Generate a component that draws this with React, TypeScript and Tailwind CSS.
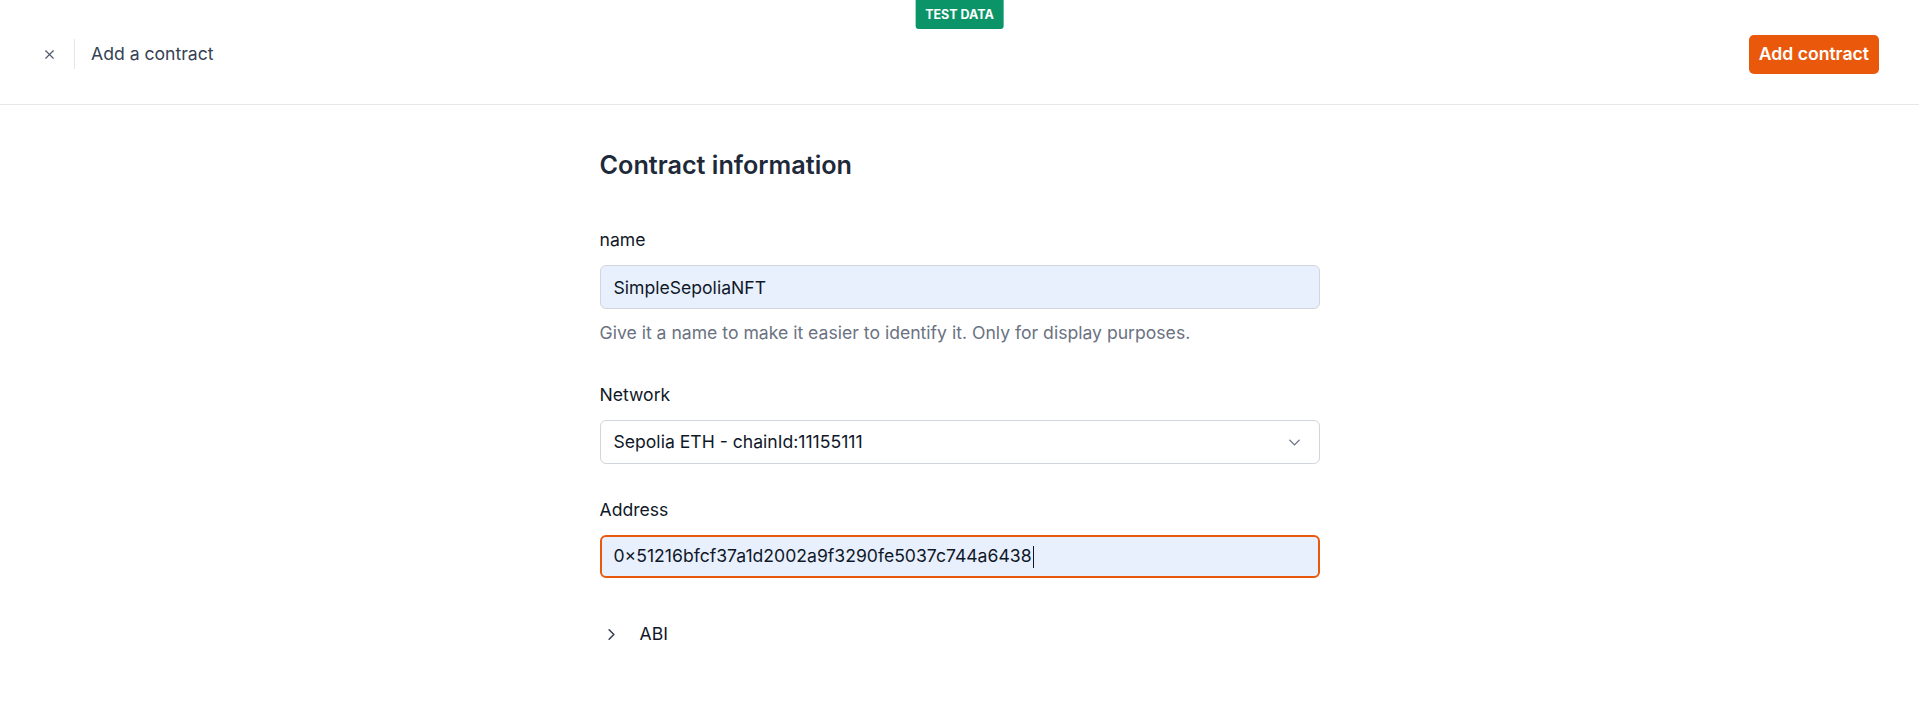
import { ChevronDown, ChevronRight, X } from 'lucide-react';

const font = { fontFamily: 'Inter, "Noto Sans", sans-serif' };

function Header() {
  return (
    <header className="relative flex h-[105px] items-center justify-between border-b border-gray-200 pl-[41px] pr-10 pt-1">
      <div className="absolute left-1/2 top-0 -translate-x-1/2 rounded-b-[3px] bg-[#0b9468] px-[10px] py-[7px] text-[12.5px] font-bold leading-[15px] text-white">
        TEST DATA
      </div>
      <div className="flex items-center">
        <button className="flex h-4 w-4 items-center justify-center text-gray-600">
          <X size={15} strokeWidth={1.75} />
        </button>
        <div className="ml-[17px] h-[30px] w-px bg-gray-200" />
        <div className="ml-4 text-[17.6px] text-gray-700">Add a contract</div>
      </div>
      <button className="h-[39px] rounded-[5px] bg-[#ea580c] px-[10px] text-[17.6px] font-semibold text-white">
        Add contract
      </button>
    </header>
  );
}

export default function App() {
  return (
    <div className="min-h-screen bg-white text-gray-900" style={font}>
      <Header />
      <main className="mx-auto max-w-[720px] pt-[44px]">
        <h1 className="text-[25.2px] font-semibold leading-8 text-gray-800">Contract information</h1>

        <label className="mt-[47px] block text-[17.6px] leading-6 text-gray-900">name</label>
        <input
          className="mt-[13px] block h-[44px] w-full rounded-md border border-gray-300 bg-[#e8f0fe] px-[13px] text-[17.6px] text-gray-900 outline-none"
          defaultValue="SimpleSepoliaNFT"
        />
        <p className="mt-3 text-[17.6px] leading-6 text-gray-500">
          Give it a name to make it easier to identify it. Only for display purposes.
        </p>

        <label className="mt-[38px] block text-[17.6px] leading-6 text-gray-900">Network</label>
        <div className="mt-[13px] flex h-[44px] w-full items-center justify-between rounded-md border border-gray-300 bg-white pl-[13px] pr-[15px]">
          <span className="text-[17.6px] text-gray-900">Sepolia ETH - chainId:11155111</span>
          <ChevronDown size={19} strokeWidth={1.75} className="text-gray-500" />
        </div>

        <label className="mt-[34px] block text-[17.6px] leading-6 text-gray-900">Address</label>
        <div className="mt-[13px] flex h-[43px] w-full items-center rounded-md border-2 border-[#ea580c] bg-[#e8f0fe] px-[12px]">
          <span className="text-[17.6px] text-gray-900">0×51216bfcf37a1d2002a9f3290fe5037c744a6438</span>
          <span className="ml-px h-[22px] w-px bg-gray-900" />
        </div>

        <button className="mt-[44px] flex items-center text-[17.6px] leading-6 text-gray-900">
          <ChevronRight size={19} strokeWidth={2} className="ml-[2px] text-gray-700" />
          <span className="ml-[19px]">ABI</span>
        </button>
      </main>
    </div>
  );
}
